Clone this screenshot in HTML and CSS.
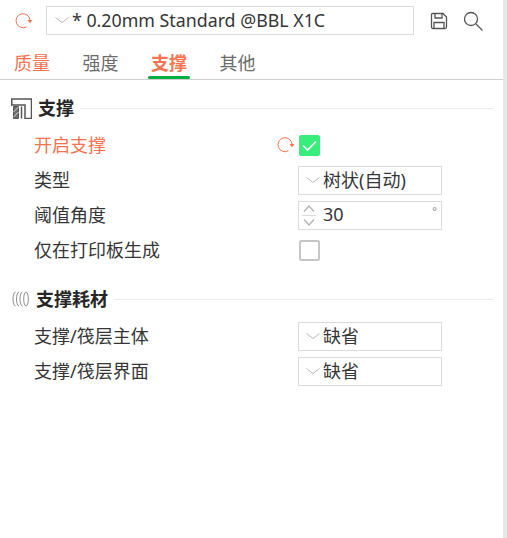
FILE: index.html
```html
<!DOCTYPE html>
<html lang="zh">

<head>
    <meta charset="UTF-8">
    <title>支撑</title>
    <link rel="stylesheet" href="styles.css">
</head>

<body>
    <div class="panel">
        <div class="preset-row">
            <svg class="icon-undo" width="18" height="18" viewBox="0 0 18 18">
                <path d="M15 8A7 7 0 1 0 11.500 14.800" />
                <path class="fill" d="M12.500 8h5l-2.500 3.200z" />
            </svg>
            <div class="preset-box">
                <svg class="chevron" width="14" height="7" viewBox="0 0 14 7"><path d="M0.500 0.500L7 5.500L13.500 0.500" /></svg>
                <span>* 0.20mm Standard @BBL X1C</span>
            </div>
            <svg class="tool-icon" width="18" height="18" viewBox="0 0 18 18">
                <path d="M2.500 1.500H13L16.500 5V15A1.500 1.500 0 0 1 15 16.500H3A1.500 1.500 0 0 1 1.500 15V2.500A1 1 0 0 1 2.500 1.500Z" />
                <path d="M5 1.500V6H12V1.500M4 16.500V10.500H14V16.500" />
            </svg>
            <svg class="tool-icon search" width="20" height="20" viewBox="0 0 20 20">
                <circle cx="8" cy="8" r="6.500" />
                <path d="M13 13L19.500 19.500" />
            </svg>
        </div>

        <div class="tabs">
            <span class="tab orange">质量</span>
            <span class="tab">强度</span>
            <span class="tab active">支撑</span>
            <span class="tab">其他</span>
        </div>

        <div class="section-head first">
            <svg class="section-icon" width="21" height="21" viewBox="0 0 21 21">
                <path d="M0.750 1H20.500V20.500H14V7H0.750Z" />
                <path class="hatch" d="M2.500 8.500H7.500V20.500H2.500Z" />
                <path class="stripe" d="M2.500 14L7.500 9M2.500 19L7.500 14" />
                <path d="M10.500 8.500V20.500" />
            </svg>
            <h2>支撑</h2>
            <div class="rule"></div>
        </div>

        <div class="row">
            <label class="orange">开启支撑</label>
            <svg class="icon-undo row-undo" width="18" height="18" viewBox="0 0 18 18">
                <path d="M15 8A7 7 0 1 0 11.500 14.800" />
                <path class="fill" d="M12.500 8h5l-2.500 3.200z" />
            </svg>
            <div class="checkbox checked">
                <svg width="15" height="12" viewBox="0 0 15 12"><path d="M1 5.500L5.500 10L14 1.500" /></svg>
            </div>
        </div>
        <div class="row">
            <label>类型</label>
            <div class="combo">
                <svg class="chevron" width="14" height="7" viewBox="0 0 14 7"><path d="M0.500 0.500L7 5.500L13.500 0.500" /></svg>
                <span>树状(自动)</span>
            </div>
        </div>
        <div class="row">
            <label>阈值角度</label>
            <div class="combo spin">
                <div class="spin-arrows">
                    <svg width="12" height="7" viewBox="0 0 12 7"><path d="M1 6.500L6 1L11 6.500" /></svg>
                    <div class="spin-line"></div>
                    <svg width="12" height="7" viewBox="0 0 12 7"><path d="M1 0.500L6 6L11 0.500" /></svg>
                </div>
                <span>30</span>
                <span class="unit">°</span>
            </div>
        </div>
        <div class="row">
            <label>仅在打印板生成</label>
            <div class="checkbox"></div>
        </div>

        <div class="section-head second">
            <svg class="section-icon filament" width="17" height="16" viewBox="0 0 17 16">
                <path d="M3.500 1A2.500 7 0 0 0 3.500 15" />
                <path d="M7 1A2.500 7 0 0 0 7 15" />
                <path d="M10.500 1A2.500 7 0 0 0 10.500 15" />
                <ellipse cx="14" cy="8" rx="2.300" ry="7" />
            </svg>
            <h2>支撑耗材</h2>
            <div class="rule"></div>
        </div>

        <div class="row">
            <label>支撑/筏层主体</label>
            <div class="combo">
                <svg class="chevron" width="14" height="7" viewBox="0 0 14 7"><path d="M0.500 0.500L7 5.500L13.500 0.500" /></svg>
                <span>缺省</span>
            </div>
        </div>
        <div class="row">
            <label>支撑/筏层界面</label>
            <div class="combo">
                <svg class="chevron" width="14" height="7" viewBox="0 0 14 7"><path d="M0.500 0.500L7 5.500L13.500 0.500" /></svg>
                <span>缺省</span>
            </div>
        </div>
    </div>
</body>

</html>
```

FILE: styles.css
```css
body {
    margin: 0;
    background-color: #fff;
    font-family: "Noto Sans", "Noto Sans CJK SC", sans-serif;
    font-size: 18px;
    color: #363636;
    overflow: hidden;
}

svg {
    display: block;
    flex: none;
    fill: none;
}

.panel {
    width: 504px;
    height: 538px;
    box-sizing: border-box;
    border-right: 1px solid #e8e8e8;
    box-shadow: 3px 0 0 #e8e8e8;
}

.orange {
    color: #f6734f;
}

/* Top preset row */
.preset-row {
    display: flex;
    align-items: center;
    height: 29px;
    padding: 6px 0 0 15px;
}

.icon-undo path {
    stroke: #f6734f;
    stroke-width: 1;
}

.icon-undo path.fill {
    fill: #f6734f;
    stroke: none;
}

.preset-box {
    display: flex;
    align-items: center;
    gap: 3px;
    width: 368px;
    height: 29px;
    box-sizing: border-box;
    margin-left: 13px;
    padding-left: 8px;
    border: 1px solid #dbdbdb;
    font-size: 17.8px;
    white-space: nowrap;
}

.preset-box span {
    padding-bottom: 2px;
}

.chevron path {
    stroke: #b8b8b8;
    stroke-width: 1;
}

.tool-icon {
    margin-left: 16px;
}

.tool-icon path,
.tool-icon circle {
    stroke: #555;
    stroke-width: 1.3;
}

.tool-icon.search {
    margin-left: 15px;
}

/* Tabs */
.tabs {
    display: flex;
    gap: 32.500px;
    height: 45px;
    padding-left: 14px;
    padding-top: 16px;
    box-sizing: border-box;
    border-bottom: 1px solid #d0d0d0;
    line-height: 25px;
    color: #6b6b6b;
}

.tab {
    position: relative;
    white-space: nowrap;
}

.tab.active {
    color: #f6734f;
    font-weight: 700;
}

.tab.active::after {
    content: "";
    position: absolute;
    left: -3px;
    right: -3px;
    top: 25px;
    height: 3px;
    border-radius: 2px;
    background-color: #00ae42;
}

/* Section headings */
.section-head {
    display: flex;
    align-items: center;
    height: 22px;
    margin-right: 10px;
    padding-left: 11px;
}

.section-head.first {
    margin-top: 17px;
}

.section-head.second {
    margin-top: 23px;
    padding-left: 12px;
}

.section-head h2 {
    margin: 0 6px;
    padding-bottom: 3px;
    font-size: 18px;
    font-weight: 700;
    color: #262626;
    white-space: nowrap;
}

.section-head.second h2 {
    margin-left: 7px;
}

.section-icon path {
    stroke: #555;
    stroke-width: 1.5;
}

.section-icon path.hatch {
    fill: #6e6e6e;
    stroke: #555;
    stroke-width: 1;
}

.section-icon path.stripe {
    stroke: #d8d8d8;
    stroke-width: 1;
}

.section-icon.filament path,
.section-icon.filament ellipse {
    fill: none;
    stroke: #808080;
    stroke-width: 0.9;
}

.rule {
    flex: 1;
    height: 1px;
    background-color: #ececec;
}

/* Option rows */
.row {
    position: relative;
    display: flex;
    align-items: center;
    height: 29px;
    margin-top: 6px;
    padding-left: 34px;
}

.section-head + .row {
    margin-top: 12px;
}

.row label {
    width: 264px;
    padding-bottom: 3px;
    white-space: nowrap;
}

.row-undo {
    position: absolute;
    left: 277px;
    top: 5px;
}

.checkbox {
    display: flex;
    align-items: center;
    justify-content: center;
    width: 21px;
    height: 21px;
    box-sizing: border-box;
    margin-left: 1px;
    border: 2px solid #c6c6c6;
    border-radius: 2px;
}

.checkbox.checked {
    background-color: #37ee7c;
    border: 1px solid #37ee7c;
}

.checkbox.checked path {
    stroke: #fff;
    stroke-width: 1.6;
}

.combo {
    display: flex;
    align-items: center;
    gap: 3px;
    width: 144px;
    height: 29px;
    box-sizing: border-box;
    padding-left: 7px;
    border: 1px solid #dbdbdb;
    white-space: nowrap;
}

.combo span {
    padding-bottom: 3px;
}

.spin {
    position: relative;
    padding-left: 3px;
    gap: 8px;
}

.spin-arrows {
    display: flex;
    flex-direction: column;
    align-items: center;
    gap: 3px;
    width: 13px;
}

.spin-line {
    width: 14px;
    height: 1px;
    background-color: #dbdbdb;
}

.spin-arrows path {
    stroke: #b0b0b0;
    stroke-width: 1.2;
}

.combo .unit {
    position: absolute;
    right: 4px;
    top: 0;
    padding: 0;
    font-size: 11px;
    line-height: 18px;
    color: #888;
}
```
